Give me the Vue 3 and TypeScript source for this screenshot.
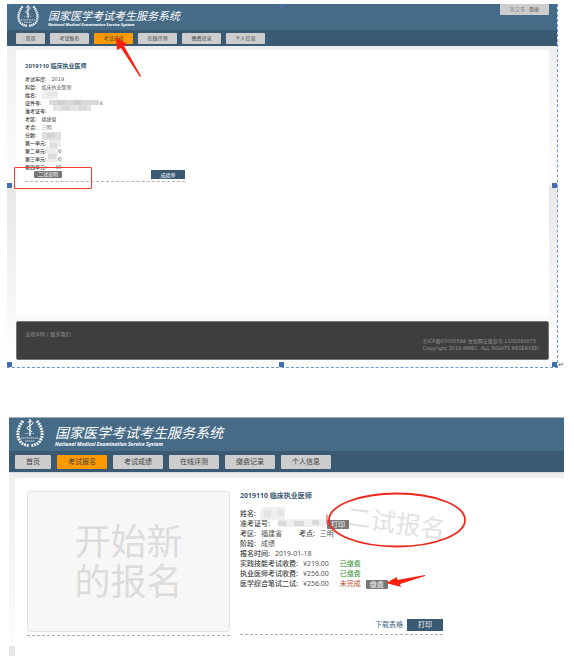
<script setup lang="ts">
interface Field {
  label: string
  value?: string
  hidden?: boolean
}

interface Fee {
  label: string
  amount: string
  status: string
  paid: boolean
}

const navItems: string[] = ['首页', '考试报名', '考试成绩', '在线评测', '缴费记录', '个人信息']

const scoreFields: Field[] = [
  { label: '考试年度:', value: '2019' },
  { label: '科目:', value: '临床执业医师' },
  { label: '姓名:' },
  { label: '证件号:', value: 'X', hidden: true },
  { label: '准考证号:' },
  { label: '考区:', value: '福建省' },
  { label: '考点:', value: '三明' },
  { label: '分数:' },
  { label: '第一单元:' },
  { label: '第二单元:', value: '00' },
  { label: '第三单元:', value: '00' },
  { label: '第四单元:', value: '00' },
]

const fees: Fee[] = [
  { label: '实践技能考试收费:', amount: '¥219.00', status: '已缴费', paid: true },
  { label: '执业医师考试收费:', amount: '¥256.00', status: '已缴费', paid: true },
  { label: '医学综合笔试二试:', amount: '¥256.00', status: '未完成', paid: false },
]
</script>

<template>
  <main class="page">
    <section class="screen small">
      <header class="banner">
        <svg class="logo" viewBox="0 0 28 30" aria-hidden="true">
          <g fill="none" stroke="#fff">
            <path d="M14 1v17" stroke-width="1.300" />
            <path d="M12 5c0-3 5-2 5 0s-6 3-6 5 5 2 5 4" stroke-width="1" />
            <path d="M9 15.500h10" stroke-width="1" stroke-dasharray="1.500 1" opacity=".6" />
            <path d="M5 20h18M9 23h10" stroke-width="1.200" stroke-dasharray="1.500 .5" opacity=".75" />
            <path d="M7 3C2 9 0 17 4 23c2 3 5 4 9 4.500M21 3c5 6 7 14 3 20-2 3-5 4-9 4.500" stroke-width="3" stroke-dasharray="1.800 .9" />
          </g>
        </svg>
        <div class="brand">
          <h1>国家医学考试考生服务系统</h1>
          <p>National Medical Examination Service System</p>
        </div>
        <div class="account"><span>陈宝玉</span><a href="#">登出</a></div>
      </header>
      <nav class="nav">
        <button v-for="item in navItems" :key="item" type="button" :class="{ active: item === '考试成绩' }">{{ item }}</button>
      </nav>
      <div class="body">
        <div class="panel">
          <article class="score">
            <h2>2019110 临床执业医师</h2>
            <p v-for="f in scoreFields" :key="f.label" class="field">
              <b>{{ f.label }}</b><span :class="{ far: f.hidden }">{{ f.value }}</span>
            </p>
            <div class="actions">
              <button type="button" class="tag">二试说明</button>
              <button type="button" class="primary">成绩单</button>
            </div>
            <svg class="mask" viewBox="0 0 80 76" aria-hidden="true">
              <path d="M18 0h15v9H16z" fill="#efefef" /><path d="M22 2h10v4H22z" fill="#e6e6e6" />
              <path d="M24 10h50v5H24z" fill="#d9d9d9" /><path d="M32 10h8v5h-8zM48 10h8v5h-8z" fill="#cecece" /><path d="M28 15h38v6H28z" fill="#e4e4e4" /><path d="M36 16h9v4h-9zM54 16h8v4h-8z" fill="#d8d8d8" />
              <path d="M17 42h19v8H17z" fill="#e1e1e1" /><path d="M22 43h8v5h-8z" fill="#d3d3d3" />
              <path d="M24 50h12v7h-3v15H23v-9h-2v-6h3z" fill="#ececec" /><path d="M25 53h7v5h-7zM23 64h8v5h-8z" fill="#dcdcdc" />
            </svg>
          </article>
        </div>
        <footer class="footer">
          <p class="links"><a href="#">法律声明</a> | <a href="#">联系我们</a></p>
          <p class="legal">京ICP备07005584 文保网安备案号:1101080075<br />Copyright 2019 NMEC. ALL RIGHTS RESERVED.</p>
        </footer>
      </div>
      <i class="handle top left"></i><i class="handle top center"></i><i class="handle top right"></i>
      <i class="handle middle left"></i><i class="handle middle right"></i>
      <i class="handle bottom left"></i><i class="handle bottom center"></i><i class="handle bottom right"></i>
      <span class="mark">↵</span>
      <i class="note-box"></i>
      <svg class="note-arrow" viewBox="0 0 28 42" aria-hidden="true">
        <path d="M1 1l11 7-3 2 17 30-1 1L6 12l-4 2z" fill="#f9200f" />
      </svg>
    </section>

    <section class="screen large">
      <header class="banner">
        <svg class="logo" viewBox="0 0 28 30" aria-hidden="true">
          <g fill="none" stroke="#fff">
            <path d="M14 1v17" stroke-width="1.300" />
            <path d="M12 5c0-3 5-2 5 0s-6 3-6 5 5 2 5 4" stroke-width="1" />
            <path d="M9 15.500h10" stroke-width="1" stroke-dasharray="1.500 1" opacity=".6" />
            <path d="M5 20h18M9 23h10" stroke-width="1.200" stroke-dasharray="1.500 .5" opacity=".75" />
            <path d="M7 3C2 9 0 17 4 23c2 3 5 4 9 4.500M21 3c5 6 7 14 3 20-2 3-5 4-9 4.500" stroke-width="3" stroke-dasharray="1.800 .9" />
          </g>
        </svg>
        <div class="brand">
          <h1>国家医学考试考生服务系统</h1>
          <p>National Medical Examination Service System</p>
        </div>
      </header>
      <nav class="nav">
        <button v-for="item in navItems" :key="item" type="button" :class="{ active: item === '考试报名' }">{{ item }}</button>
      </nav>
      <div class="body">
        <div class="panel cards">
          <div class="start">
            <button type="button">开始新<br />的报名</button>
          </div>
          <article class="entry">
            <h2>2019110 临床执业医师</h2>
            <p class="field"><b>姓名:</b></p>
            <p class="field ticket"><b>准考证号:</b><button type="button" class="tag">打印</button></p>
            <p class="field"><b>考区:</b><span>福建省</span><b class="second">考点:</b><span>三明</span></p>
            <p class="field"><b>阶段:</b><span>成绩</span></p>
            <p class="field"><b>报名时间:</b><span>2019-01-18</span></p>
            <p v-for="fee in fees" :key="fee.label" class="field fee">
              <b>{{ fee.label }}</b><span>{{ fee.amount }}</span>
              <em :class="{ due: !fee.paid }">{{ fee.status }}</em>
              <button v-if="!fee.paid" type="button" class="tag">缴费</button>
            </p>
            <div class="actions">
              <a href="#">下载表格</a>
              <button type="button" class="primary">打印</button>
            </div>
            <svg class="mask" viewBox="0 0 90 24" aria-hidden="true">
              <path d="M21 1q2-2 5-1h19v12h41v8H38v-7H20z" fill="#efefef" />
              <path d="M24 3h7v8h-7zM38 3h6v6h-6z" fill="#e4e4e4" /><path d="M38 14h8v5h-8zM54 14h10v5H54zM72 13h7v5h-7z" fill="#dadada" />
              <path d="M86 6l2 3v8h-2z" fill="#e9a0a0" />
            </svg>
            <span class="watermark">二试报名</span>
            <svg class="note-ellipse" viewBox="0 0 140 56" aria-hidden="true">
              <ellipse cx="70" cy="28" rx="68" ry="26.500" fill="none" stroke="#f0281c" stroke-width="1.800" />
            </svg>
            <svg class="note-arrow" viewBox="0 0 42 14" aria-hidden="true">
              <path d="M1 9l11-6v3l28-5v1L15 10l1 3z" fill="#f9200f" />
            </svg>
          </article>
        </div>
      </div>
    </section>
  </main>
</template>

<style>
body {
  margin: 0;
  background: #fff;
}
</style>

<style scoped>
* {
  box-sizing: border-box;
}
h1, h2, p {
  margin: 0;
}
a {
  color: inherit;
  text-decoration: none;
}
button {
  margin: 0;
  padding: 0;
  border: 0;
  font: inherit;
  cursor: pointer;
}
.page {
  display: flex;
  flex-direction: column;
  gap: 49px;
  padding-top: 4px;
  overflow: hidden;
  color: #555;
  font-family: "Noto Sans", "Noto Sans CJK SC", sans-serif;
}
.screen {
  position: relative;
}
.small {
  margin: 0 16px 0 7px;
  border-right: 1px dashed #6f97cf;
  border-bottom: 1px dashed #6f97cf;
  font-size: 5px;
  line-height: 8px;
}
.large {
  margin: 0 10px 0 9px;
  border-top: 1px solid #a3afb9;
  font-size: 7px;
  line-height: 10px;
}
.banner {
  display: flex;
  align-items: flex-start;
  background: #466b86;
  color: #fff;
}
.small .banner {
  height: 26px;
  padding-left: 10px;
  gap: 9px;
}
.large .banner {
  height: 33px;
  padding-left: 7px;
  gap: 11px;
}
.small .logo {
  width: 22px;
  height: 24px;
}
.large .logo {
  width: 28px;
  height: 30px;
}
.brand {
  flex: 1;
  white-space: nowrap;
}
.brand h1 {
  font-style: italic;
  font-weight: 400;
}
.brand p {
  font-family: "Noto Sans", sans-serif;
  font-style: italic;
  font-weight: 700;
}
.small .brand {
  padding-top: 5px;
}
.small h1 {
  font-size: 11px;
  line-height: 13px;
}
.small .brand p {
  font-size: 4px;
  line-height: 5px;
}
.large .brand {
  padding-top: 6px;
}
.large h1 {
  font-size: 14px;
  line-height: 17px;
}
.large .brand p {
  font-size: 5px;
  line-height: 6px;
}
.account {
  display: flex;
  justify-content: center;
  gap: 4px;
  width: 49px;
  height: 11px;
  margin-right: 8px;
  border-radius: 0 0 1px 1px;
  background: #cdcdcd;
  color: #888;
  line-height: 10px;
}
.account a {
  color: #444;
}
.nav {
  display: flex;
  align-items: center;
  background: #3a5a73;
}
.nav button {
  border-radius: 1px;
  background: #cdcdcd;
  color: #444;
}
.nav button.active {
  background: #ff9900;
}
.small .nav {
  height: 16px;
  gap: 5px;
  padding-left: 9px;
}
.small .nav button {
  width: 39px;
  height: 11px;
}
.small .nav button:first-child {
  width: 29px;
}
.large .nav {
  height: 21px;
  gap: 6px;
  padding-left: 6px;
}
.large .nav button {
  width: 50px;
  height: 14px;
}
.large .nav button:first-child {
  width: 36px;
}
.small .body {
  padding: 4px 8px 7px 9px;
  background: linear-gradient(#efefef, #fdfdfd 139px, #e7e7e7 139px, #fff);
}
.large .body {
  padding: 5px 0 0 6px;
  border-top: 1px solid #d5dce6;
  background: linear-gradient(#eeeeee, #fcfcfc 173px, #e5e5e5 173px, #e8e8e8);
}
.panel {
  border-radius: 2px;
  background: #fff;
}
.small .panel {
  min-height: 267px;
  padding: 12px 9px;
}
h2 {
  color: #3a5a73;
  font-weight: 700;
}
.small h2 {
  margin-bottom: 5px;
  font-size: 6px;
  line-height: 8px;
}
.score {
  position: relative;
  width: 160px;
  border-bottom: 1px dashed #b5b5b5;
}
.field {
  display: flex;
  align-items: center;
  white-space: nowrap;
}
.field b {
  color: #444;
  font-weight: 500;
}
.small .field span, .legal {
  font-family: "DejaVu Sans", "Noto Sans CJK SC", sans-serif;
}
.small .field {
  height: 8px;
  gap: 5px;
}
.far {
  padding-left: 53px;
}
.small .field:nth-of-type(n + 10) {
  gap: 9px;
}
.actions {
  display: flex;
  align-items: center;
}
.tag {
  border-radius: 1px;
  background: #777;
  color: #fff;
}
.primary {
  background: #3a5a73;
  color: #fff;
}
.small .actions {
  justify-content: space-between;
  height: 9px;
  margin: -1px 0 2px;
  padding-left: 9px;
}
.small .tag {
  width: 28px;
  height: 7px;
  line-height: 7px;
}
.small .primary {
  width: 34px;
  height: 9px;
}
.score .mask {
  position: absolute;
  top: 28px;
  left: 0;
  width: 80px;
  height: 76px;
}
.footer {
  margin-top: 4px;
  border: 1px solid #777;
  border-radius: 2px;
  background: #3e3e3e;
  color: #969696;
  line-height: 7px;
}
.small .footer {
  padding: 8px 8px 7px;
}
.legal {
  width: fit-content;
  margin-left: auto;
}
.footer .links {
  line-height: 8px;
}
.handle {
  position: absolute;
  width: 5px;
  height: 5px;
  background: #456fa8;
}
.handle.left {
  left: 0;
}
.handle.center {
  left: calc(50% - 3px);
}
.handle.right {
  right: 0;
}
.handle.top {
  top: 0;
  height: 4px;
  opacity: .6;
}
.handle.middle {
  top: 179px;
}
.handle.bottom {
  bottom: 0;
}
.mark {
  position: absolute;
  right: -7px;
  bottom: -2px;
  color: #555;
  font-family: "DejaVu Sans", sans-serif;
  font-size: 7px;
}
.note-box {
  position: absolute;
  top: 163px;
  left: 7px;
  width: 78px;
  height: 22px;
  border: 1px solid #f63a2e;
  border-radius: 1px;
}
.small .note-arrow {
  position: absolute;
  top: 32px;
  left: 108px;
  width: 28px;
  height: 42px;
}
.cards {
  display: flex;
  align-items: flex-start;
  gap: 10px;
  min-height: 179px;
  padding: 13px 11px 20px 12px;
}
.start {
  width: 203px;
  padding-bottom: 3px;
  border-bottom: 1px dashed #aaa;
}
.start button {
  display: block;
  width: 100%;
  height: 141px;
  border: 1px solid #e3e3e3;
  border-radius: 3px;
  background: #f7f7f7;
  color: #dcdcdc;
  font-size: 36px;
  line-height: 40px;
}
.entry {
  position: relative;
  width: 203px;
  border-bottom: 1px dashed #aaa;
}
.large h2 {
  margin-bottom: 8px;
  font-size: 7px;
  line-height: 10px;
}
.large .field {
  height: 10px;
  gap: 5px;
}
.large .tag {
  width: 22px;
  height: 9px;
  line-height: 9px;
}
.ticket .tag {
  margin-left: 52px;
}
.second {
  margin-left: 12px;
}
.fee em {
  margin-left: 6px;
  color: #2f8a2f;
  font-style: normal;
}
.fee em.due {
  color: #c2452c;
}
.large .actions {
  justify-content: flex-end;
  gap: 4px;
  margin: 30px 0 3px;
}
.large .actions a {
  color: #466b86;
}
.large .primary {
  width: 36px;
  height: 12px;
}
.entry .mask {
  position: absolute;
  top: 16px;
  left: 0;
  width: 90px;
  height: 24px;
}
.watermark {
  position: absolute;
  top: 16px;
  left: 106px;
  color: #e2e2e2;
  font-size: 25px;
  line-height: 30px;
  white-space: nowrap;
  transform: rotate(8deg);
}
.ticket .tag {
  position: relative;
  z-index: 1;
}
.note-ellipse {
  position: absolute;
  z-index: 2;
  top: 1px;
  left: 87px;
  width: 140px;
  height: 56px;
}
.large .note-arrow {
  position: absolute;
  top: 83px;
  left: 145px;
  width: 42px;
  height: 14px;
}
</style>
